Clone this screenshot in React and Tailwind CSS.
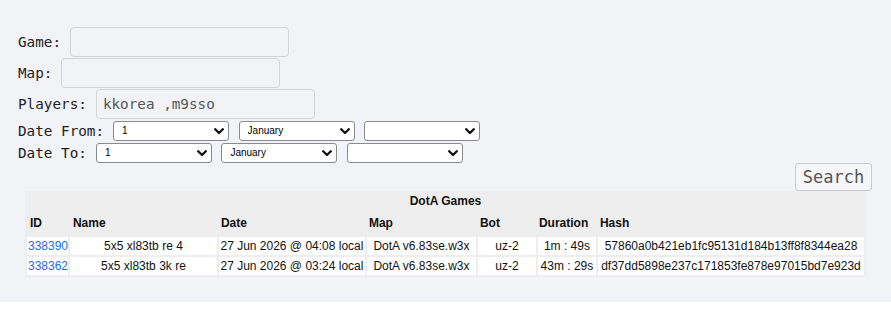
import { useState } from 'react';

const Chevron = () => (
  <svg
    className="pointer-events-none absolute right-[5px] top-[7px]"
    width="10"
    height="7"
    viewBox="0 0 10 7"
    fill="none"
  >
    <path d="M1.2 1.2 L5 5 L8.8 1.2" stroke="#111" strokeWidth="2.3" strokeLinecap="round" strokeLinejoin="round" />
  </svg>
);

const DateSelect = ({ value, options }) => (
  <div className="relative h-[20px]">
    <select
      defaultValue={value}
      className="block appearance-none w-[116px] h-[20px] border border-[#8a8a8a] rounded-[3px] bg-white pl-[8px] text-[10px] leading-[18px] text-black font-['Liberation_Sans',Arial,sans-serif]"
    >
      {options.map((o) => (
        <option key={o} value={o}>
          {o}
        </option>
      ))}
    </select>
    <Chevron />
  </div>
);

const days = Array.from({ length: 31 }, (_, i) => String(i + 1));
const months = ['January', 'February', 'March', 'April', 'May', 'June', 'July', 'August', 'September', 'October', 'November', 'December'];
const years = [''];

const games = [
  {
    id: '338390',
    name: '5x5 xl83tb re 4',
    date: '27 Jun 2026 @ 04:08 local',
    map: 'DotA v6.83se.w3x',
    bot: 'uz-2',
    duration: '1m : 49s',
    hash: '57860a0b421eb1fc95131d184b13ff8f8344ea28',
  },
  {
    id: '338362',
    name: '5x5 xl83tb 3k re',
    date: '27 Jun 2026 @ 03:24 local',
    map: 'DotA v6.83se.w3x',
    bot: 'uz-2',
    duration: '43m : 29s',
    hash: 'df37dd5898e237c171853fe878e97015bd7e923d',
  },
];

const TextRow = ({ label, value }) => (
  <div className="flex items-start gap-[9px] h-[31px]">
    <span className="leading-[30px]">{label}</span>
    <input
      defaultValue={value}
      className="w-[219px] h-[30px] border border-[#d3d4d8] rounded-[4px] px-[6px] text-[#555] outline-none"
    />
  </div>
);

export default function App() {
  const [players] = useState('kkorea ,m9sso');

  return (
    <div className="bg-[#f2f3f7] pt-[27px] pb-[25px] text-[14.3px] text-[#222] font-['DejaVu_Sans_Mono',monospace]">
      <div className="pl-[18px] flex flex-col">
        <TextRow label="Game:" value="" />
        <TextRow label="Map:" value="" />
        <TextRow label="Players:" value={players} />
        <div className="flex items-center gap-[9px] h-[20px] mt-px">
          <span className="leading-[20px]">Date From:</span>
          <div className="flex gap-[9.5px]">
            <DateSelect value="1" options={days} />
            <DateSelect value="January" options={months} />
            <DateSelect value="" options={years} />
          </div>
        </div>
        <div className="flex items-center gap-[9px] h-[20px] mt-[2px]">
          <span className="leading-[20px]">Date To:</span>
          <div className="flex gap-[9.5px]">
            <DateSelect value="1" options={days} />
            <DateSelect value="January" options={months} />
            <DateSelect value="" options={years} />
          </div>
        </div>
      </div>

      <div className="flex justify-end pr-[19px]">
        <button className="w-[77px] h-[28px] border border-[#c9cacd] rounded-[3px] bg-[#f6f6f8] text-[17px] leading-[26px] text-[#555]">
          Search
        </button>
      </div>

      <table className="mx-auto table-fixed w-[841px] border-separate border-spacing-[2px] bg-[#eeeeee] text-[12px] text-[#111] font-['Liberation_Sans',Arial,sans-serif]">
        <colgroup>
          <col className="w-[41px]" />
          <col className="w-[147px]" />
          <col className="w-[146px]" />
          <col className="w-[109px]" />
          <col className="w-[58px]" />
          <col className="w-[58px]" />
          <col className="w-[266px]" />
        </colgroup>
        <thead>
          <tr>
            <th colSpan={7} className="h-[16px] leading-[14px] font-bold text-center">
              DotA Games
            </th>
          </tr>
          <tr className="font-bold text-left">
            <th className="h-[24px] pl-[3px]">ID</th>
            <th className="pl-[3px]">Name</th>
            <th className="pl-[2px]">Date</th>
            <th className="pl-[2px]">Map</th>
            <th className="pl-[2px]">Bot</th>
            <th className="pl-[1px]">Duration</th>
            <th className="pl-[2px]">Hash</th>
          </tr>
        </thead>
        <tbody>
          {games.map((g) => (
            <tr key={g.id} className="bg-white">
              <td className="h-[17px] leading-[15px] text-left pl-px text-[#1a6fdc] whitespace-nowrap">
                <a href="#">{g.id}</a>
              </td>
              <td className="text-center whitespace-nowrap">{g.name}</td>
              <td className="text-center whitespace-nowrap">{g.date}</td>
              <td className="text-center whitespace-nowrap">{g.map}</td>
              <td className="text-center whitespace-nowrap">{g.bot}</td>
              <td className="text-center whitespace-nowrap">{g.duration}</td>
              <td className="text-center whitespace-nowrap">{g.hash}</td>
            </tr>
          ))}
        </tbody>
      </table>
    </div>
  );
}
